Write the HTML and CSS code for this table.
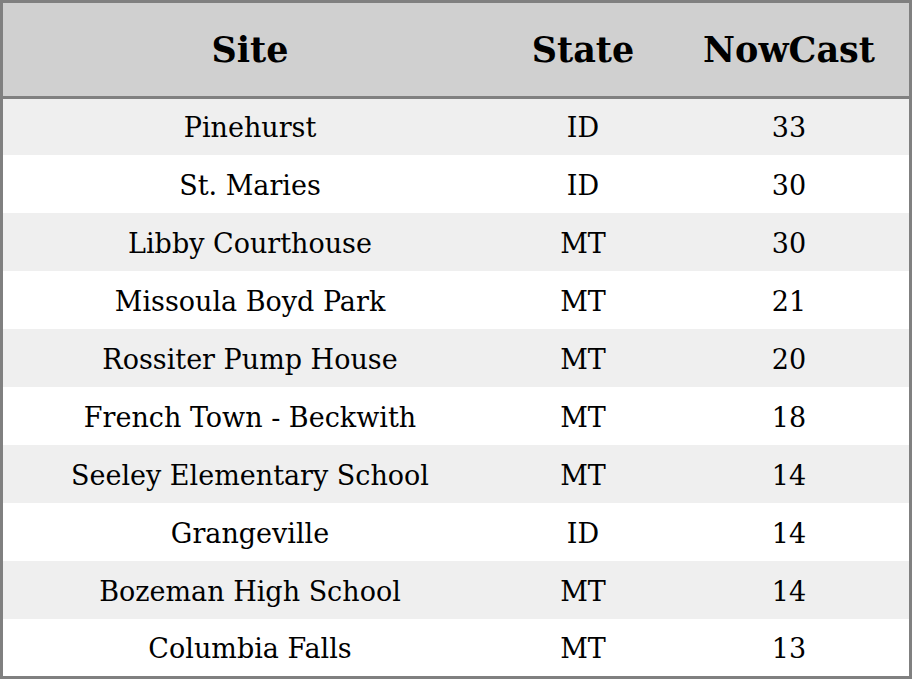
FILE: index.html
```html
<!DOCTYPE html>
<html>
<head>
<meta charset="utf-8">
<link rel="stylesheet" href="styles.css">
</head>
<body>
<table class="aq">
  <colgroup>
    <col class="c-site"><col class="c-state"><col class="c-now">
  </colgroup>
  <thead>
    <tr><th>Site</th><th>State</th><th>NowCast</th></tr>
  </thead>
  <tbody>
    <tr><td>Pinehurst</td><td>ID</td><td>33</td></tr>
    <tr><td>St. Maries</td><td>ID</td><td>30</td></tr>
    <tr><td>Libby Courthouse</td><td>MT</td><td>30</td></tr>
    <tr><td>Missoula Boyd Park</td><td>MT</td><td>21</td></tr>
    <tr><td>Rossiter Pump House</td><td>MT</td><td>20</td></tr>
    <tr><td>French Town - Beckwith</td><td>MT</td><td>18</td></tr>
    <tr><td>Seeley Elementary School</td><td>MT</td><td>14</td></tr>
    <tr><td>Grangeville</td><td>ID</td><td>14</td></tr>
    <tr><td>Bozeman High School</td><td>MT</td><td>14</td></tr>
    <tr><td>Columbia Falls</td><td>MT</td><td>13</td></tr>
  </tbody>
</table>
</body>
</html>
```
FILE: styles.css
```css
html, body {
  margin: 0;
  padding: 0;
  background: #ffffff;
}
.aq {
  width: 912px;
  border-collapse: separate;
  border-spacing: 0;
  border: 3px solid #808080;
  font-family: "DejaVu Serif", serif;
  color: #000;
  table-layout: fixed;
}
.c-site { width: 494px; }
.c-state { width: 172px; }
.c-now { width: 240px; }
.aq th {
  box-sizing: border-box;
  height: 96px;
  padding: 0;
  background: #d0d0d0;
  border-bottom: 3px solid #808080;
  font-size: 35px;
  font-weight: bold;
  text-align: center;
  vertical-align: middle;
}
.aq td {
  box-sizing: border-box;
  height: 58px;
  padding: 2px 0 0;
  font-size: 27px;
  text-align: center;
  vertical-align: middle;
}
.aq tbody tr:first-child td {
  height: 56px;
  padding-top: 0;
}
.aq tbody tr:last-child td {
  height: 57px;
}
.aq tbody tr:nth-child(odd) td {
  background: #efefef;
}
```
